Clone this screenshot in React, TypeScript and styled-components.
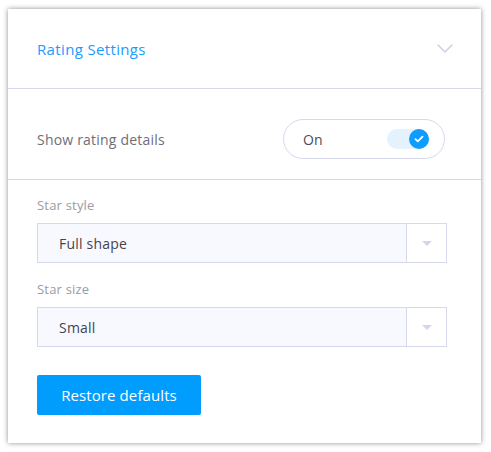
import React from 'react';
import styled, { createGlobalStyle } from 'styled-components';

const GlobalStyle = createGlobalStyle`
  html, body {
    margin: 0;
    padding: 0;
    background: #ffffff;
  }
  body {
    font-family: 'Open Sans', 'Liberation Sans', sans-serif;
  }
  * {
    box-sizing: border-box;
  }
`;

const BLUE = '#0e9cff';
const LINE = '#d6d9ec';

const Page = styled.div`
  padding: 9px 10px 8px 8px;
`;

const Card = styled.section`
  width: 473px;
  background: #fff;
  box-shadow: 0 0 5px rgba(0, 0, 0, 0.45);
`;

const Header = styled.div`
  display: flex;
  align-items: center;
  justify-content: space-between;
  height: 80px;
  padding: 0 28px 0 29px;
  border-bottom: 1px solid ${LINE};
`;

const Title = styled.h2`
  margin: 0;
  color: #1a9bff;
  font-size: 15px;
  font-weight: 400;
  letter-spacing: 0.35px;
`;

const SettingRow = styled.div`
  display: flex;
  align-items: center;
  justify-content: space-between;
  padding: 30px 36px 20px 29px;
  border-bottom: 1px solid ${LINE};
`;

const RowLabel = styled.span`
  color: #6e6e7a;
  font-size: 14px;
  letter-spacing: 0.2px;
`;

const TogglePill = styled.div`
  display: flex;
  align-items: center;
  justify-content: space-between;
  width: 162px;
  height: 40px;
  padding: 0 15px 0 19px;
  border: 1px solid ${LINE};
  border-radius: 20px;
`;

const ToggleText = styled.span`
  color: #4d4d57;
  font-size: 14px;
`;

const Track = styled.div<{ $on: boolean }>`
  display: flex;
  justify-content: ${(p) => (p.$on ? 'flex-end' : 'flex-start')};
  width: 42px;
  height: 20px;
  border-radius: 10px;
  background: #e4f2fd;
`;

const Knob = styled.div`
  display: flex;
  align-items: center;
  justify-content: center;
  width: 20px;
  height: 20px;
  border-radius: 50%;
  background: ${BLUE};
`;

const Body = styled.div`
  display: flex;
  flex-direction: column;
  padding: 16px 34px 28px 29px;
`;

const FieldLabel = styled.label`
  color: #9b9ba3;
  font-size: 13px;
  line-height: 18px;
  letter-spacing: 0.2px;
  margin-bottom: 9px;
`;

const Select = styled.div`
  display: flex;
  align-items: stretch;
  height: 40px;
  border: 1px solid ${LINE};
  background: #f8f9fe;
  margin-bottom: 17px;
`;

const SelectValue = styled.div`
  flex: 1;
  display: flex;
  align-items: center;
  padding-left: 21px;
  color: #444450;
  font-size: 14px;
  letter-spacing: 0.2px;
`;

const SelectArrow = styled.div`
  display: flex;
  align-items: center;
  justify-content: center;
  width: 40px;
  border-left: 1px solid ${LINE};
  background: #fff;
`;

const Caret = styled.span`
  width: 0;
  height: 0;
  border-left: 5px solid transparent;
  border-right: 5px solid transparent;
  border-top: 5px solid #d3d6ea;
`;

const RestoreButton = styled.button`
  align-self: flex-start;
  width: 164px;
  height: 40px;
  margin-top: 11px;
  border: none;
  border-radius: 2px;
  background: #009dff;
  color: #fff;
  font-family: inherit;
  font-size: 15px;
  letter-spacing: 0.1px;
  cursor: pointer;
`;

const Chevron = () => (
  <svg width="16" height="9" viewBox="0 0 16 9" fill="none">
    <path d="M1 1l7 7 7-7" stroke="#cdd1ea" strokeWidth="1.6" strokeLinecap="round" strokeLinejoin="round" />
  </svg>
);

const Check = () => (
  <svg width="10" height="8" viewBox="0 0 10 8" fill="none">
    <path d="M1.5 4.2l2.3 2.2L8.5 1.6" stroke="#fff" strokeWidth="1.8" strokeLinecap="round" strokeLinejoin="round" />
  </svg>
);

const SelectField = ({ label, value }: { label: string; value: string }) => (
  <>
    <FieldLabel>{label}</FieldLabel>
    <Select>
      <SelectValue>{value}</SelectValue>
      <SelectArrow>
        <Caret />
      </SelectArrow>
    </Select>
  </>
);

export default function App() {
  return (
    <Page>
      <GlobalStyle />
      <Card>
        <Header>
          <Title>Rating Settings</Title>
          <Chevron />
        </Header>
        <SettingRow>
          <RowLabel>Show rating details</RowLabel>
          <TogglePill>
            <ToggleText>On</ToggleText>
            <Track $on>
              <Knob>
                <Check />
              </Knob>
            </Track>
          </TogglePill>
        </SettingRow>
        <Body>
          <SelectField label="Star style" value="Full shape" />
          <SelectField label="Star size" value="Small" />
          <RestoreButton>Restore defaults</RestoreButton>
        </Body>
      </Card>
    </Page>
  );
}
